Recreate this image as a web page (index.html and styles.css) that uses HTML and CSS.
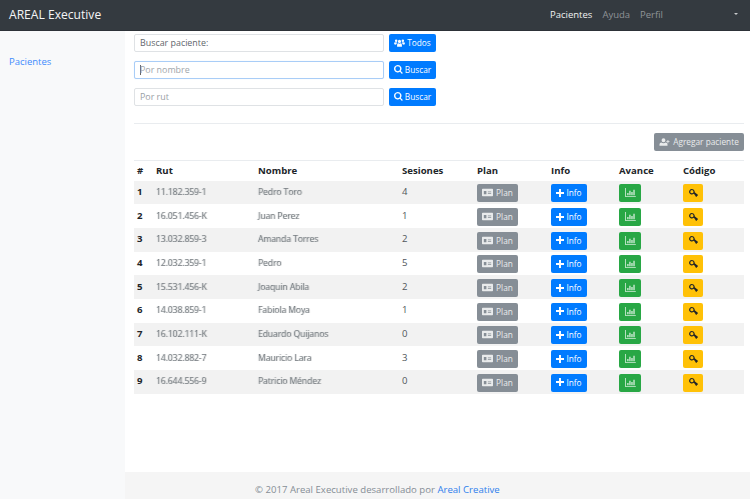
FILE: index.html
```html
<!DOCTYPE html>
<html lang="es">
<head>
<meta charset="utf-8">
<title>AREAL Executive</title>
<link rel="stylesheet" href="styles.css">
</head>
<body>
<svg class="defs" width="0" height="0" aria-hidden="true">
  <symbol id="i-users" viewBox="0 0 16 12"><path d="M8 1.200a2.400 2.400 0 1 1 0 4.800 2.400 2.400 0 0 1 0-4.800zM3 .6a1.900 1.900 0 1 1 0 3.800 1.900 1.900 0 0 1 0-3.800zM13 .6a1.900 1.900 0 1 1 0 3.800 1.900 1.900 0 0 1 0-3.800zM4.400 11.500V9c0-1.900 1-2.800 2-2.800l1.600 1 1.600-1c1 0 2 .9 2 2.800v2.500zM0 8V6.300C0 5.200.8 4.800 1.500 4.800l1.500.6 1-.4c.2.500.5.800.9 1.100-1.100.5-1.900 1.300-2 2.600zM16 8V6.300c0-1.100-.8-1.500-1.500-1.500l-1.500.6-1-.4c-.2.500-.5.800-.9 1.100 1.100.5 1.900 1.300 2 2.600z"/></symbol>
  <symbol id="i-search" viewBox="0 0 12 12"><path d="M5 0a5 5 0 0 1 4 8l2.800 2.700-1.200 1.200L7.900 9.100A5 5 0 1 1 5 0zm0 1.800a3.200 3.200 0 1 0 0 6.400 3.200 3.200 0 0 0 0-6.400z"/></symbol>
  <symbol id="i-useradd" viewBox="0 0 15 12"><path d="M6 .5a2.900 2.900 0 1 1 0 5.800A2.900 2.900 0 0 1 6 .5zM0 11.500V9.800C0 7.900 1.300 6.800 2.800 6.800c.8.500 1.900 1 3.200 1s2.400-.5 3.200-1c1.500 0 2.800 1.100 2.800 3v1.700zM12 3h1.300v1.800H15v1.300h-1.700V8H12V6.100h-1.800V4.800H12z"/></symbol>
  <symbol id="i-card" viewBox="0 0 15 12"><path fill-rule="evenodd" d="M1 1h13a1 1 0 0 1 1 1v8a1 1 0 0 1-1 1H1a1 1 0 0 1-1-1V2a1 1 0 0 1 1-1zM2.500 4v4.500h3.500V4zM8 4.500v1h4.500v-1zM8 6.800v1h4.500v-1z"/></symbol>
  <symbol id="i-plus" viewBox="0 0 10 10"><path d="M3.800 0h2.400v3.800H10v2.400H6.200V10H3.800V6.200H0V3.800h3.800z"/></symbol>
  <symbol id="i-chart" viewBox="0 0 13 11"><path d="M0 0h1v10h12v1H0zM2.500 6h1.600v3H2.500zM5 3.500h1.600V9H5zM7.500 5h1.600v4H7.500zM10 2h1.600v7H10z"/></symbol>
  <symbol id="i-key" viewBox="0 0 12 11"><path fill-rule="evenodd" d="M3.800 0a3.800 3.800 0 0 1 3.500 2.400 3.800 3.800 0 0 1 .3 2.200L12 8v1.300h-1.300v1.200H9V9.300H8V8.100L6.200 6.700A3.800 3.800 0 1 1 3.800 0zm0 1.500a2.200 2.200 0 1 0 0 4.400 2.200 2.200 0 0 0 0-4.400z"/></symbol>
</svg>

<header class="navbar">
  <a class="brand">AREAL Executive</a>
  <nav class="nav-links">
    <a class="nav-link active">Pacientes</a>
    <a class="nav-link">Ayuda</a>
    <a class="nav-link">Perfil</a>
  </nav>
  <span class="caret"></span>
</header>

<div class="layout">
  <aside class="sidebar">
    <a class="side-link">Pacientes</a>
  </aside>

  <div class="content">
    <main class="main">
      <form class="search-row first">
        <div class="input static">Buscar paciente:</div>
        <button type="button" class="btn primary todos"><svg class="ic ic-users"><use href="#i-users"/></svg>Todos</button>
      </form>
      <form class="search-row second">
        <div class="input focus"><span class="cursor"></span>Por nombre</div>
        <button type="button" class="btn primary buscar"><svg class="ic ic-search"><use href="#i-search"/></svg>Buscar</button>
      </form>
      <form class="search-row third">
        <div class="input">Por rut</div>
        <button type="button" class="btn primary buscar"><svg class="ic ic-search"><use href="#i-search"/></svg>Buscar</button>
      </form>

      <hr class="rule">

      <div class="actions">
        <button type="button" class="btn grey add"><svg class="ic ic-useradd"><use href="#i-useradd"/></svg>Agregar paciente</button>
      </div>

      <table class="table">
        <colgroup>
          <col class="c-n"><col class="c-rut"><col class="c-nom"><col class="c-ses"><col class="c-plan"><col class="c-info"><col class="c-ava"><col class="c-cod">
        </colgroup>
        <thead>
          <tr><th>#</th><th>Rut</th><th>Nombre</th><th>Sesiones</th><th>Plan</th><th>Info</th><th>Avance</th><th>Código</th></tr>
        </thead>
        <tbody id="rows">
          <tr><th>1</th><td><span class="smear">11.182.359-1</span></td><td><span class="smear">Pedro Toro</span></td><td>4</td><td><button type="button" class="btn grey cell"><svg class="ic ic-card"><use href="#i-card"/></svg>Plan</button></td><td><button type="button" class="btn primary cell"><svg class="ic ic-plus"><use href="#i-plus"/></svg>Info</button></td><td><button type="button" class="btn green cell sq"><svg class="ic ic-chart"><use href="#i-chart"/></svg></button></td><td><button type="button" class="btn yellow cell sq"><svg class="ic ic-key"><use href="#i-key"/></svg></button></td></tr>
          <tr><th>2</th><td><span class="smear">16.051.456-K</span></td><td><span class="smear">Juan Perez</span></td><td>1</td><td><button type="button" class="btn grey cell"><svg class="ic ic-card"><use href="#i-card"/></svg>Plan</button></td><td><button type="button" class="btn primary cell"><svg class="ic ic-plus"><use href="#i-plus"/></svg>Info</button></td><td><button type="button" class="btn green cell sq"><svg class="ic ic-chart"><use href="#i-chart"/></svg></button></td><td><button type="button" class="btn yellow cell sq"><svg class="ic ic-key"><use href="#i-key"/></svg></button></td></tr>
          <tr><th>3</th><td><span class="smear">13.032.859-3</span></td><td><span class="smear">Amanda Torres</span></td><td>2</td><td><button type="button" class="btn grey cell"><svg class="ic ic-card"><use href="#i-card"/></svg>Plan</button></td><td><button type="button" class="btn primary cell"><svg class="ic ic-plus"><use href="#i-plus"/></svg>Info</button></td><td><button type="button" class="btn green cell sq"><svg class="ic ic-chart"><use href="#i-chart"/></svg></button></td><td><button type="button" class="btn yellow cell sq"><svg class="ic ic-key"><use href="#i-key"/></svg></button></td></tr>
          <tr><th>4</th><td><span class="smear">12.032.359-1</span></td><td><span class="smear">Pedro</span></td><td>5</td><td><button type="button" class="btn grey cell"><svg class="ic ic-card"><use href="#i-card"/></svg>Plan</button></td><td><button type="button" class="btn primary cell"><svg class="ic ic-plus"><use href="#i-plus"/></svg>Info</button></td><td><button type="button" class="btn green cell sq"><svg class="ic ic-chart"><use href="#i-chart"/></svg></button></td><td><button type="button" class="btn yellow cell sq"><svg class="ic ic-key"><use href="#i-key"/></svg></button></td></tr>
          <tr><th>5</th><td><span class="smear">15.531.456-K</span></td><td><span class="smear">Joaquin Abila</span></td><td>2</td><td><button type="button" class="btn grey cell"><svg class="ic ic-card"><use href="#i-card"/></svg>Plan</button></td><td><button type="button" class="btn primary cell"><svg class="ic ic-plus"><use href="#i-plus"/></svg>Info</button></td><td><button type="button" class="btn green cell sq"><svg class="ic ic-chart"><use href="#i-chart"/></svg></button></td><td><button type="button" class="btn yellow cell sq"><svg class="ic ic-key"><use href="#i-key"/></svg></button></td></tr>
          <tr><th>6</th><td><span class="smear">14.038.859-1</span></td><td><span class="smear">Fabiola Moya</span></td><td>1</td><td><button type="button" class="btn grey cell"><svg class="ic ic-card"><use href="#i-card"/></svg>Plan</button></td><td><button type="button" class="btn primary cell"><svg class="ic ic-plus"><use href="#i-plus"/></svg>Info</button></td><td><button type="button" class="btn green cell sq"><svg class="ic ic-chart"><use href="#i-chart"/></svg></button></td><td><button type="button" class="btn yellow cell sq"><svg class="ic ic-key"><use href="#i-key"/></svg></button></td></tr>
          <tr><th>7</th><td><span class="smear">16.102.111-K</span></td><td><span class="smear">Eduardo Quijanos</span></td><td>0</td><td><button type="button" class="btn grey cell"><svg class="ic ic-card"><use href="#i-card"/></svg>Plan</button></td><td><button type="button" class="btn primary cell"><svg class="ic ic-plus"><use href="#i-plus"/></svg>Info</button></td><td><button type="button" class="btn green cell sq"><svg class="ic ic-chart"><use href="#i-chart"/></svg></button></td><td><button type="button" class="btn yellow cell sq"><svg class="ic ic-key"><use href="#i-key"/></svg></button></td></tr>
          <tr><th>8</th><td><span class="smear">14.032.882-7</span></td><td><span class="smear">Mauricio Lara</span></td><td>3</td><td><button type="button" class="btn grey cell"><svg class="ic ic-card"><use href="#i-card"/></svg>Plan</button></td><td><button type="button" class="btn primary cell"><svg class="ic ic-plus"><use href="#i-plus"/></svg>Info</button></td><td><button type="button" class="btn green cell sq"><svg class="ic ic-chart"><use href="#i-chart"/></svg></button></td><td><button type="button" class="btn yellow cell sq"><svg class="ic ic-key"><use href="#i-key"/></svg></button></td></tr>
          <tr><th>9</th><td><span class="smear">16.644.556-9</span></td><td><span class="smear">Patricio Méndez</span></td><td>0</td><td><button type="button" class="btn grey cell"><svg class="ic ic-card"><use href="#i-card"/></svg>Plan</button></td><td><button type="button" class="btn primary cell"><svg class="ic ic-plus"><use href="#i-plus"/></svg>Info</button></td><td><button type="button" class="btn green cell sq"><svg class="ic ic-chart"><use href="#i-chart"/></svg></button></td><td><button type="button" class="btn yellow cell sq"><svg class="ic ic-key"><use href="#i-key"/></svg></button></td></tr>
        </tbody>
      </table>
    </main>

    <footer class="footer">© 2017 Areal Executive desarrollado por <a class="foot-link">Areal Creative</a></footer>
  </div>
</div>
</body>
</html>
```

FILE: styles.css
```css
* { box-sizing: border-box; }
html, body { height: 100%; }
body {
  margin: 0;
  height: 499px;
  overflow: hidden;
  display: flex;
  flex-direction: column;
  font-family: "Open Sans", "Noto Sans", sans-serif;
  font-size: 9.6px;
  color: #212529;
  background: #fff;
}
.defs { position: absolute; }

.navbar {
  flex: 0 0 31px;
  display: flex;
  align-items: center;
  padding: 0 12px 1px 9px;
  background: #343a40;
  border-bottom: 1px solid #2d3238;
}
.brand { font-size: 12.1px; color: #f4f5f6; }
.nav-links { margin-left: auto; display: flex; gap: 10px; }
.nav-link { font-size: 9.5px; color: #8f9397; }
.nav-link.active { color: #f1f2f3; }
.caret {
  margin-left: 71px;
  margin-top: -2px;
  border: 2.5px solid transparent;
  border-top-color: #c8cacc;
  border-bottom-width: 0;
}

.layout { flex: 1; display: flex; min-height: 0; }
.sidebar {
  flex: 0 0 125px;
  padding: 24px 9px;
  background: #f8f9fa;
}
.side-link { font-size: 9.5px; color: #3d8bfd; }

.content { flex: 1; display: flex; flex-direction: column; min-width: 0; }
.main { flex: 1; padding: 3px 6px 0 9px; }

.search-row { display: flex; gap: 5px; height: 18px; }
.search-row.second { margin-top: 9px; }
.search-row.third { margin-top: 9px; }
.input {
  flex: 0 0 250px;
  display: flex;
  align-items: center;
  padding: 0 5px 1px;
  background: #fff;
  border: 1px solid #dfe2e5;
  border-radius: 2px;
  font-size: 8.9px;
  color: #9aa0a5;
}
.input.static { color: #5f666c; }
.input.focus {
  border-color: #a9cdf7;
  box-shadow: 0 0 1px #cfe3fb;
  color: #a0a6ab;
}
.cursor { width: 1px; height: 10px; background: #666; margin-right: -1px; }

.btn {
  display: inline-flex;
  align-items: center;
  justify-content: center;
  border: 1px solid transparent;
  border-radius: 2px;
  font-family: inherit;
  font-size: 8.3px;
  color: #fff;
  padding: 0 0 1px;
}
.btn.primary { background: #007bff; }
.btn.grey { background: #868e96; color: #e9ebec; }
.btn.green { background: #28a745; color: #d4edda; }
.btn.yellow { background: #ffc107; color: #212529; }
.ic { fill: currentColor; margin-right: 2px; flex: none; }
.sq .ic { margin-right: 0; }
.todos { flex: 0 0 47px; }
.buscar { flex: 0 0 47px; }
.ic-users { width: 11px; height: 8px; }
.ic-search { width: 9px; height: 9px; }
.ic-useradd { width: 11px; height: 8px; margin-right: 3px; }
.ic-card { width: 11px; height: 9px; margin-right: 3px; }
.ic-plus { width: 8px; height: 8px; }
.ic-chart { width: 11px; height: 9px; }
.ic-key { width: 9px; height: 8px; }

.rule { margin: 17px 0 0; border: 0; border-top: 1px solid #e9ecef; }
.actions { display: flex; justify-content: flex-end; margin-top: 9px; }
.add { width: 90px; height: 18px; }

.table {
  width: 100%;
  margin-top: 9px;
  border-collapse: collapse;
  table-layout: fixed;
  font-size: 9.6px;
}
.c-n { width: 19px; }
.c-rut { width: 102px; }
.c-nom { width: 144px; }
.c-ses { width: 75px; }
.c-plan { width: 74px; }
.c-info { width: 68px; }
.c-ava { width: 64px; }
.c-cod { width: auto; }
.table th, .table td {
  padding: 0 3px;
  text-align: left;
  vertical-align: middle;
  font-weight: 400;
}
.table thead tr { height: 20px; border-top: 1px solid #e9ecef; }
.table thead th { font-weight: 700; font-size: 9.6px; }
.table tbody tr { height: 23.7px; }
.table tbody th { font-weight: 700; padding-bottom: 2px; }
.table tbody tr:nth-child(odd) { background: #f2f2f2; }
.table tbody td { color: #50565b; padding-bottom: 2px; }
.table tbody td:nth-child(n+5) { padding-bottom: 0; padding-top: 2px; }

.smear {
  font-size: 8.6px;
  font-weight: 400;
  letter-spacing: -.1px;
  color: #7b8186;
  text-shadow: 1px 0 0 rgba(120,125,130,.35), -1px 0 0 rgba(120,125,130,.15);
  filter: blur(.3px);
  display: inline-block;
}

.cell { height: 18px; vertical-align: middle; }
.btn.grey.cell { width: 41px; }
.btn.primary.cell { width: 36px; }
.btn.green.cell { width: 22px; }
.btn.yellow.cell { width: 20px; }

.footer {
  flex: 0 0 27px;
  padding-top: 11px;
  padding-left: 130px;
  background: #f5f5f5;
  font-size: 9.6px;
  color: #868e96;
}
.foot-link { color: #2f80ed; }
```
